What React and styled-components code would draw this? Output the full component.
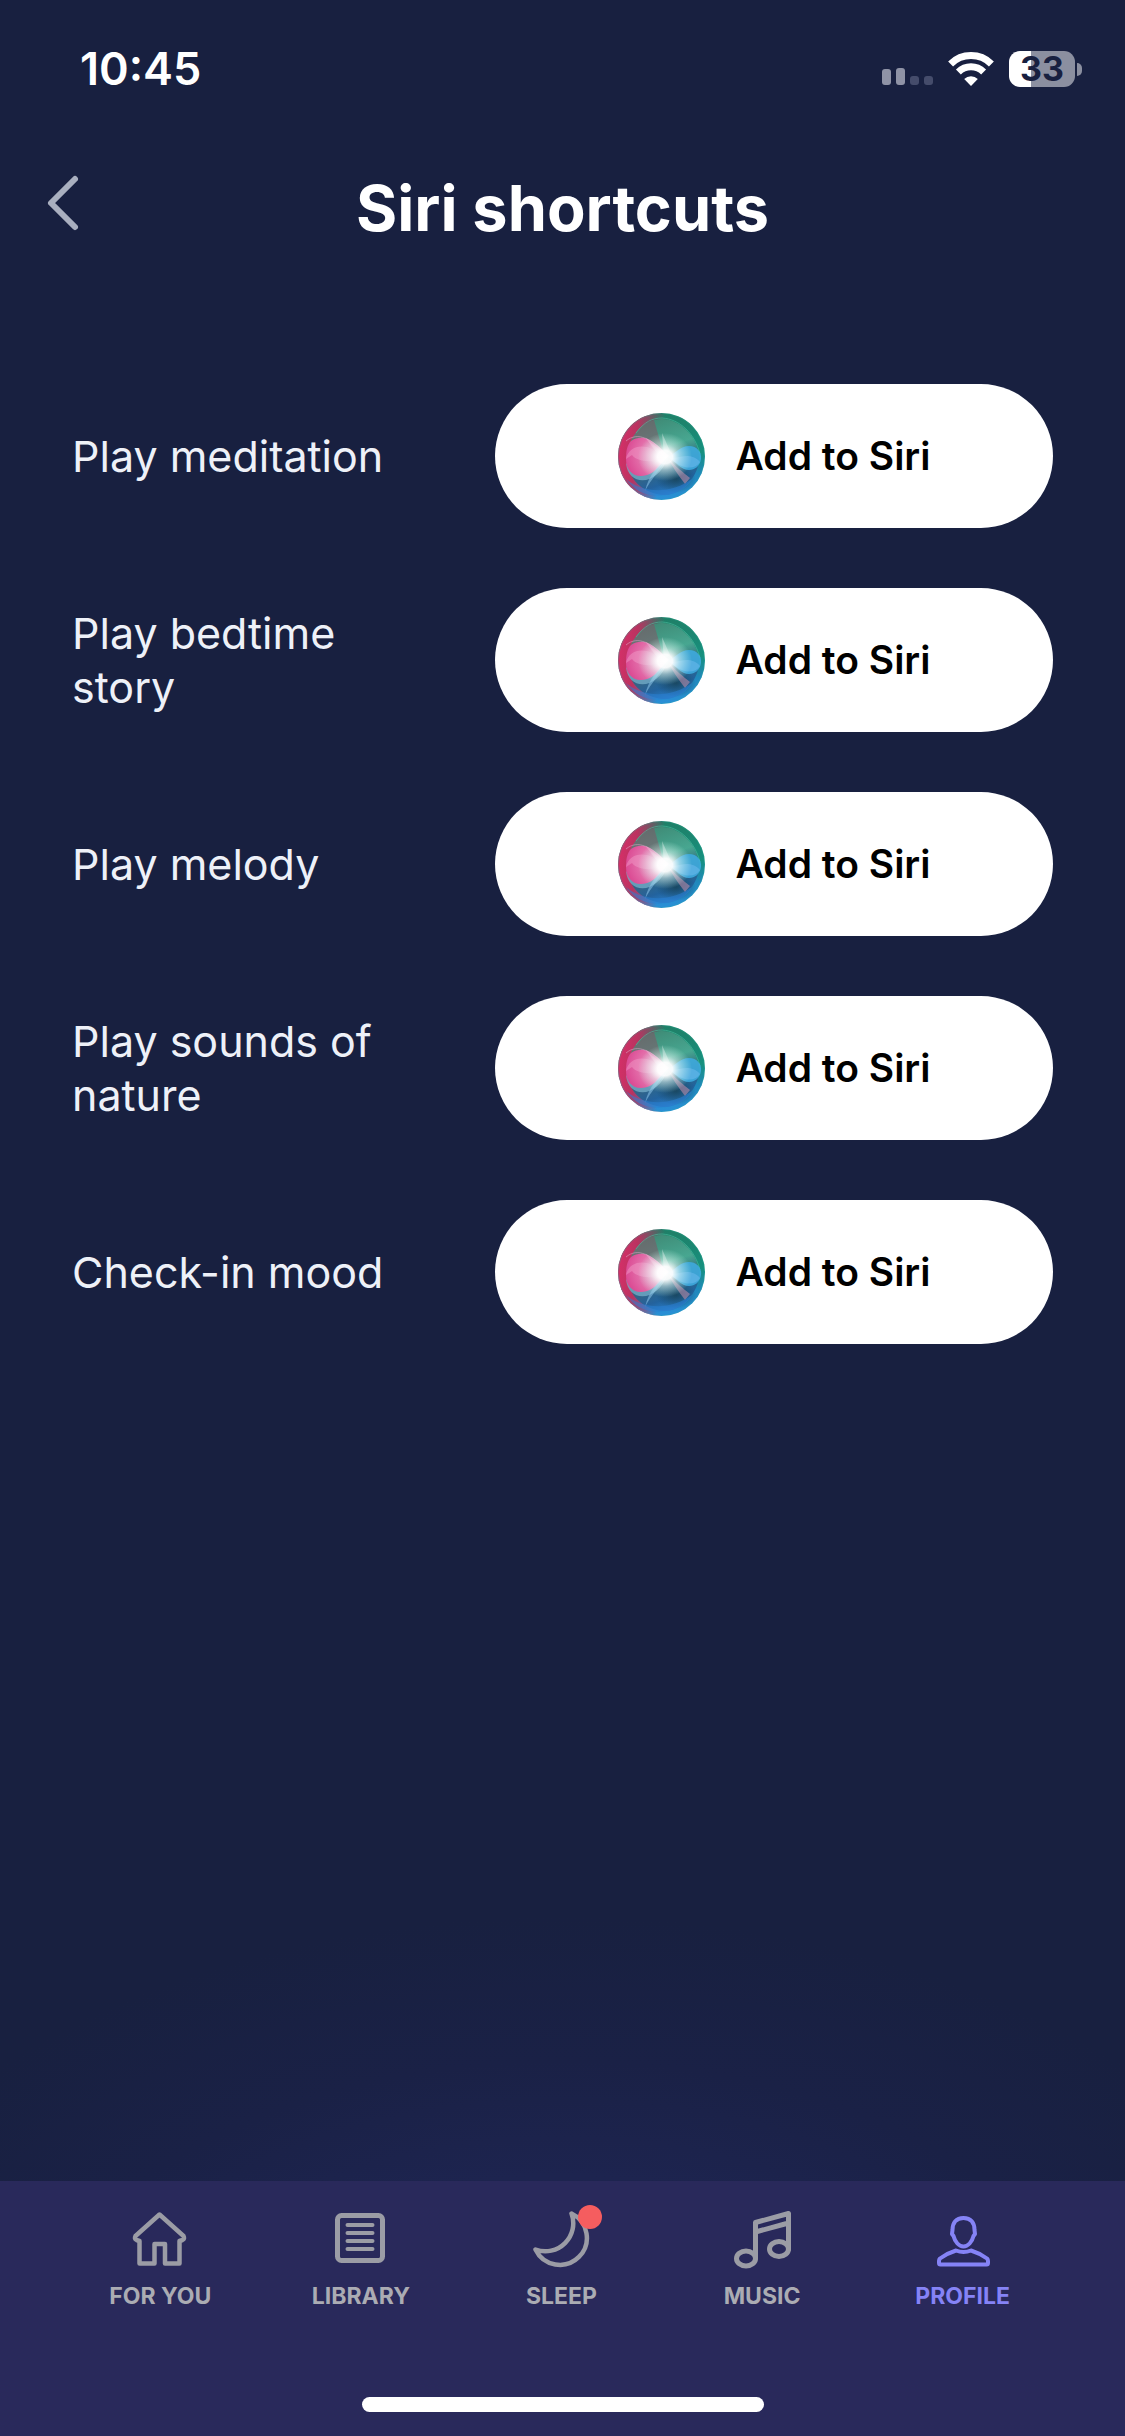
import React from "react";
import styled, { createGlobalStyle } from "styled-components";

const GlobalStyle = createGlobalStyle`
  *, *::before, *::after { box-sizing: border-box; }
  body {
    margin: 0;
    background: #182040;
    font-family: Inter, "Liberation Sans", sans-serif;
    -webkit-font-smoothing: antialiased;
  }
`;

const Screen = styled.div`
  min-height: 100vh;
  display: flex;
  flex-direction: column;
  color: #fff;
  background: radial-gradient(ellipse 800px 520px at 50% 100%, #1f2557 0%, #1d244f 50%, #1a2146 72%, #182040 100%);
`;

const StatusBar = styled.div`
  display: flex;
  align-items: center;
  justify-content: space-between;
  height: 138px;
  padding: 0 43px 0 80px;
`;

const Time = styled.time`
  font-size: 45px;
  line-height: 52px;
  font-weight: 600;
`;

const StatusIcons = styled.div`
  display: flex;
  align-items: center;
  gap: 15px;
`;

const Battery = styled.div`
  display: flex;
  align-items: center;
  gap: 2px;
`;

const BatteryBody = styled.div`
  display: flex;
  align-items: center;
  justify-content: center;
  width: 66px;
  height: 36px;
  border-radius: 11px;
  background: linear-gradient(90deg, #fff ${(p) => p.$level}%, #8b8fa0 ${(p) => p.$level}%);
  color: #182040;
  font-size: 34px;
  line-height: 36px;
  font-weight: 700;
`;

const BatteryCap = styled.div`
  width: 5px;
  height: 13px;
  border-radius: 0 6px 6px 0;
  background: #8b8fa0;
`;

const Header = styled.header`
  display: grid;
  grid-template-columns: 96px 1fr 96px;
  align-items: center;
  height: 140px;
`;

const BackButton = styled.button`
  display: flex;
  align-items: center;
  height: 84px;
  padding: 0 0 10px 45px;
  border: 0;
  background: none;
  color: #a9afbf;
  cursor: pointer;
`;

const Title = styled.h1`
  margin: 0;
  text-align: center;
  font-size: 63px;
  line-height: 78px;
  font-weight: 700;
`;

const ShortcutList = styled.ul`
  flex: 1;
  display: flex;
  flex-direction: column;
  gap: 60px;
  margin: 0;
  padding: 106px 72px 60px;
  list-style: none;
`;

const ShortcutRow = styled.li`
  display: grid;
  grid-template-columns: minmax(0, 351px) minmax(0, 558px);
  justify-content: space-between;
  align-items: center;
  gap: 60px;
`;

const ShortcutName = styled.span`
  color: #eef1f8;
  font-size: 43px;
  line-height: 54px;
`;

const SiriButton = styled.button`
  display: flex;
  align-items: center;
  justify-content: center;
  gap: 31px;
  height: 144px;
  padding: 0;
  border: 0;
  border-radius: 72px;
  background: #fff;
  color: #000;
  font-family: inherit;
  font-size: 39px;
  line-height: 48px;
  font-weight: 600;
  cursor: pointer;
`;

const TabBar = styled.nav`
  display: flex;
  flex-direction: column;
  align-items: center;
  justify-content: space-between;
  height: 255px;
  padding: 29px 0 24px;
  background: #29295b;
`;

const TabList = styled.div`
  display: grid;
  grid-template-columns: repeat(5, 1fr);
  width: 100%;
  padding: 0 62px 0 60px;
`;

const Tab = styled.a`
  display: flex;
  flex-direction: column;
  align-items: center;
  gap: 12px;
  color: ${(p) => (p.$active ? "#8583f6" : "#abacb3")};
  font-size: 23px;
  line-height: 28px;
  font-weight: 700;
  text-decoration: none;
`;

const TabIcon = styled.span`
  position: relative;
  display: flex;
  color: ${(p) => (p.$active ? "#8583f6" : "#9b9ca5")};
`;

const Badge = styled.span`
  position: absolute;
  top: -5px;
  right: -11px;
  width: 24px;
  height: 24px;
  border-radius: 50%;
  background: #f55d5f;
`;

const HomeIndicator = styled.div`
  width: 402px;
  height: 15px;
  border-radius: 8px;
  background: #fff;
`;

function SignalIcon() {
  return (
    <svg width="51" height="36" viewBox="0 0 51 36" aria-hidden="true">
      <g fill="#8f93a6">
        <rect x="0" y="18" width="9" height="16" rx="3" />
        <rect x="14" y="17" width="9" height="17" rx="3" />
      </g>
      <g fill="#454c6b">
        <rect x="28" y="25" width="9" height="9" rx="3" />
        <rect x="42" y="25" width="9" height="9" rx="3" />
      </g>
    </svg>
  );
}

function WifiIcon() {
  return (
    <svg width="46" height="36" viewBox="0 0 46 36" aria-hidden="true">
      <g fill="none" stroke="#fff" strokeWidth="7">
        <path d="M2.600 13 A29 29 0 0 1 43.400 13" />
        <path d="M10.400 21 A18 18 0 0 1 35.600 21" />
      </g>
      <path d="M23 35 L16.200 28 A9.600 9.600 0 0 1 29.800 28 Z" fill="#fff" />
    </svg>
  );
}

function ChevronIcon() {
  return (
    <svg width="36" height="60" viewBox="0 0 36 60" aria-hidden="true">
      <path d="M30 6 L6 30 L30 54" fill="none" stroke="currentColor" strokeWidth="6" strokeLinecap="round" strokeLinejoin="round" />
    </svg>
  );
}

function SiriOrb({ id }) {
  const ref = (name) => `${id}-${name}`;
  const url = (name) => `url(#${ref(name)})`;
  return (
    <svg width="87" height="87" viewBox="0 0 87 87" aria-hidden="true">
      <defs>
        <clipPath id={ref("clip")}>
          <circle cx="43.5" cy="43.5" r="43.5" />
        </clipPath>
        <linearGradient id={ref("base")} x1="0" y1="0" x2="0" y2="1">
          <stop offset="0" stopColor="#1f7f66" />
          <stop offset="0.45" stopColor="#17907f" />
          <stop offset="0.7" stopColor="#2088bc" />
          <stop offset="1" stopColor="#2a8fd8" />
        </linearGradient>
        <linearGradient id={ref("red")} x1="0" y1="0.4" x2="1" y2="0.5">
          <stop offset="0" stopColor="#d62f68" />
          <stop offset="0.2" stopColor="#b93360" />
          <stop offset="0.5" stopColor="#b93360" stopOpacity="0" />
        </linearGradient>
        <linearGradient id={ref("inner")} x1="0.3" y1="0" x2="0.6" y2="1">
          <stop offset="0" stopColor="#3f8a75" />
          <stop offset="0.4" stopColor="#4aa892" />
          <stop offset="0.62" stopColor="#32687f" />
          <stop offset="0.84" stopColor="#22619c" />
          <stop offset="1" stopColor="#2b7fcb" />
        </linearGradient>
        <radialGradient id={ref("pink")} cx="0.85" cy="0.45" r="0.9">
          <stop offset="0" stopColor="#fbd3e6" />
          <stop offset="0.45" stopColor="#e77fb4" />
          <stop offset="1" stopColor="#da4590" />
        </radialGradient>
        <radialGradient id={ref("glow")}>
          <stop offset="0" stopColor="#fff" />
          <stop offset="0.28" stopColor="#fff" stopOpacity="0.95" />
          <stop offset="0.55" stopColor="#eefffa" stopOpacity="0.5" />
          <stop offset="1" stopColor="#d0fff0" stopOpacity="0" />
        </radialGradient>
        <radialGradient id={ref("dark")}>
          <stop offset="0" stopColor="#184459" stopOpacity="0.85" />
          <stop offset="1" stopColor="#184459" stopOpacity="0" />
        </radialGradient>
      </defs>
      <g clipPath={url("clip")}>
        <rect width="87" height="87" fill={url("base")} />
        <rect width="87" height="87" fill={url("red")} />
        <path d="M0 56 C8 76 26 86 44 87 L6 87 Z" fill="#a050a4" opacity="0.6" />
        <path d="M44 6 C62 6 80 24 81 44 C82 62 64 83 46 82 C26 81 9 66 9 46 C9 26 24 6 44 6 Z" fill={url("inner")} opacity="0.95" />
        <path d="M36 7 C22 12 11 26 9 42 L46 42 Z" fill="#8e4a62" opacity="0.45" />
        <path d="M18 20 C26 9 34 5 44 5 C62 6 77 21 82 41" fill="none" stroke="#4cc0a0" strokeWidth="1" opacity="0.6" />
        <ellipse cx="58" cy="66" rx="20" ry="14" fill={url("dark")} />
        <path d="M8 50 C10 74 40 74 50 44 C42 60 18 62 8 50 Z" fill="#7ab4cf" opacity="0.7" />
        <path d="M13 28 C20 23 29 24 35 29 C41 33 46 39 51 43 C44 48 38 63 23 63 C13 63 8 55 8 47 C8 38 9 32 13 28 Z" fill={url("pink")} />
        <path d="M8 46 C10 34 24 30 36 37 L50 43 C38 50 20 50 14 42" fill="#f6a8cf" opacity="0.4" />
        <path d="M8 28 C20 18 34 26 50 43" fill="none" stroke="#d9a3c4" strokeWidth="1" opacity="0.6" />
        <path d="M50 44 C58 40 62 33 71 33 C79 33 84 39 83 46 C82 53 77 57 71 57 C63 57 58 49 50 44 Z" fill="#3fabdf" opacity="0.88" />
        <path d="M52 45 C61 46 72 38 82 49 C77 57 64 57 52 45 Z" fill="#6fbcf0" opacity="0.5" />
        <path d="M50 45 C57 53 66 60 72 65 L67 71 C60 62 54 53 50 45 Z" fill="#b98aa9" opacity="0.6" />
        <path d="M49 44 C42 58 33 66 27 78 C31 62 39 54 49 44 Z" fill="#8cc4ea" opacity="0.55" />
        <path d="M8 66 C27 82 55 80 74 66 C66 84 24 92 8 66 Z" fill="#2a80d4" opacity="0.55" />
        <ellipse cx="47" cy="44" rx="27" ry="24" fill={url("glow")} />
        <path d="M46 42 L44 20 L52 38 Z" fill="#fff" opacity="0.35" />
        <path d="M50 44 L27 24 L44 47 Z" fill="#fff" opacity="0.2" />
      </g>
      <circle cx="43.5" cy="43.5" r="43" fill="none" stroke="#29b49e" strokeWidth="1" opacity="0.25" />
    </svg>
  );
}

function LineIcon({ children }) {
  return (
    <svg
      width="60"
      height="60"
      viewBox="0 0 60 60"
      fill="none"
      stroke="currentColor"
      strokeWidth="5"
      strokeLinecap="round"
      strokeLinejoin="round"
      aria-hidden="true"
    >
      {children}
    </svg>
  );
}

const HomeIcon = () => (
  <LineIcon>
    <path d="M29.500 4.500 L5.500 26 Q4 29 6.500 30 L9.500 31 V53.500 H24.500 V34 H35 V53.500 H49.500 V31 L52.500 30 Q55 29 53.500 26 Z" strokeWidth="4.500" />
  </LineIcon>
);

const LibraryIcon = () => (
  <LineIcon>
    <rect x="6.500" y="5.500" width="45" height="45" rx="4" />
    <path d="M16.500 15 H41.500 M16.500 23 H41.500 M16.500 31 H41.500 M16.500 39 H41.500" strokeWidth="4" />
  </LineIcon>
);

const MoonIcon = () => (
  <LineIcon>
    <path d="M40.500 3.500 A27 27 0 1 1 4.500 39.500 A28 28 0 0 0 40.500 3.500 Z" strokeWidth="4.500" />
  </LineIcon>
);

const MusicIcon = () => (
  <LineIcon>
    <ellipse cx="14" cy="48.500" rx="9.500" ry="7.500" />
    <ellipse cx="47" cy="39" rx="9.500" ry="7.500" />
    <path d="M23.500 48 V12.500 L56.500 3.500 V39 M23.500 22 L56.500 13" />
  </LineIcon>
);

const ProfileIcon = () => (
  <LineIcon>
    <path d="M30.500 8 C23 8 19.500 13 19.500 20 L19 24 L20.500 26 C22 32 26 36.500 30.500 36.500 C35 36.500 39 32 40.500 26 L42 24 L41.500 20 C41.500 13 38 8 30.500 8 Z" strokeWidth="4" />
    <path d="M23 40.500 C15 43 11 45.500 7 48.500 Q6 49.500 6 51 V53 Q6 54.500 7.500 54.500 H53.500 Q55 54.500 55 53 V51 Q55 49.500 54 48.500 C50 45.500 46 43 38 40.500 Q30.500 43.500 23 40.500 Z" strokeWidth="4" />
  </LineIcon>
);

const shortcuts = [
  "Play meditation",
  "Play bedtime story",
  "Play melody",
  "Play sounds of nature",
  "Check-in mood",
];

const tabs = [
  { label: "FOR YOU", Icon: HomeIcon },
  { label: "LIBRARY", Icon: LibraryIcon },
  { label: "SLEEP", Icon: MoonIcon, badge: true },
  { label: "MUSIC", Icon: MusicIcon },
  { label: "PROFILE", Icon: ProfileIcon, active: true },
];

export default function App() {
  return (
    <Screen>
      <GlobalStyle />
      <StatusBar>
        <Time>10:45</Time>
        <StatusIcons>
          <SignalIcon />
          <WifiIcon />
          <Battery>
            <BatteryBody $level={33}>33</BatteryBody>
            <BatteryCap />
          </Battery>
        </StatusIcons>
      </StatusBar>
      <Header>
        <BackButton type="button" aria-label="Back">
          <ChevronIcon />
        </BackButton>
        <Title>Siri shortcuts</Title>
      </Header>
      <ShortcutList>
        {shortcuts.map((name, i) => (
          <ShortcutRow key={name}>
            <ShortcutName id={`shortcut-${i}`}>{name}</ShortcutName>
            <SiriButton type="button" aria-describedby={`shortcut-${i}`}>
              <SiriOrb id={`orb-${i}`} />
              Add to Siri
            </SiriButton>
          </ShortcutRow>
        ))}
      </ShortcutList>
      <TabBar>
        <TabList>
          {tabs.map(({ label, Icon, badge, active }) => (
            <Tab key={label} href="#" $active={active} aria-current={active ? "page" : undefined}>
              <TabIcon $active={active}>
                <Icon />
                {badge && <Badge />}
              </TabIcon>
              {label}
            </Tab>
          ))}
        </TabList>
        <HomeIndicator />
      </TabBar>
    </Screen>
  );
}
